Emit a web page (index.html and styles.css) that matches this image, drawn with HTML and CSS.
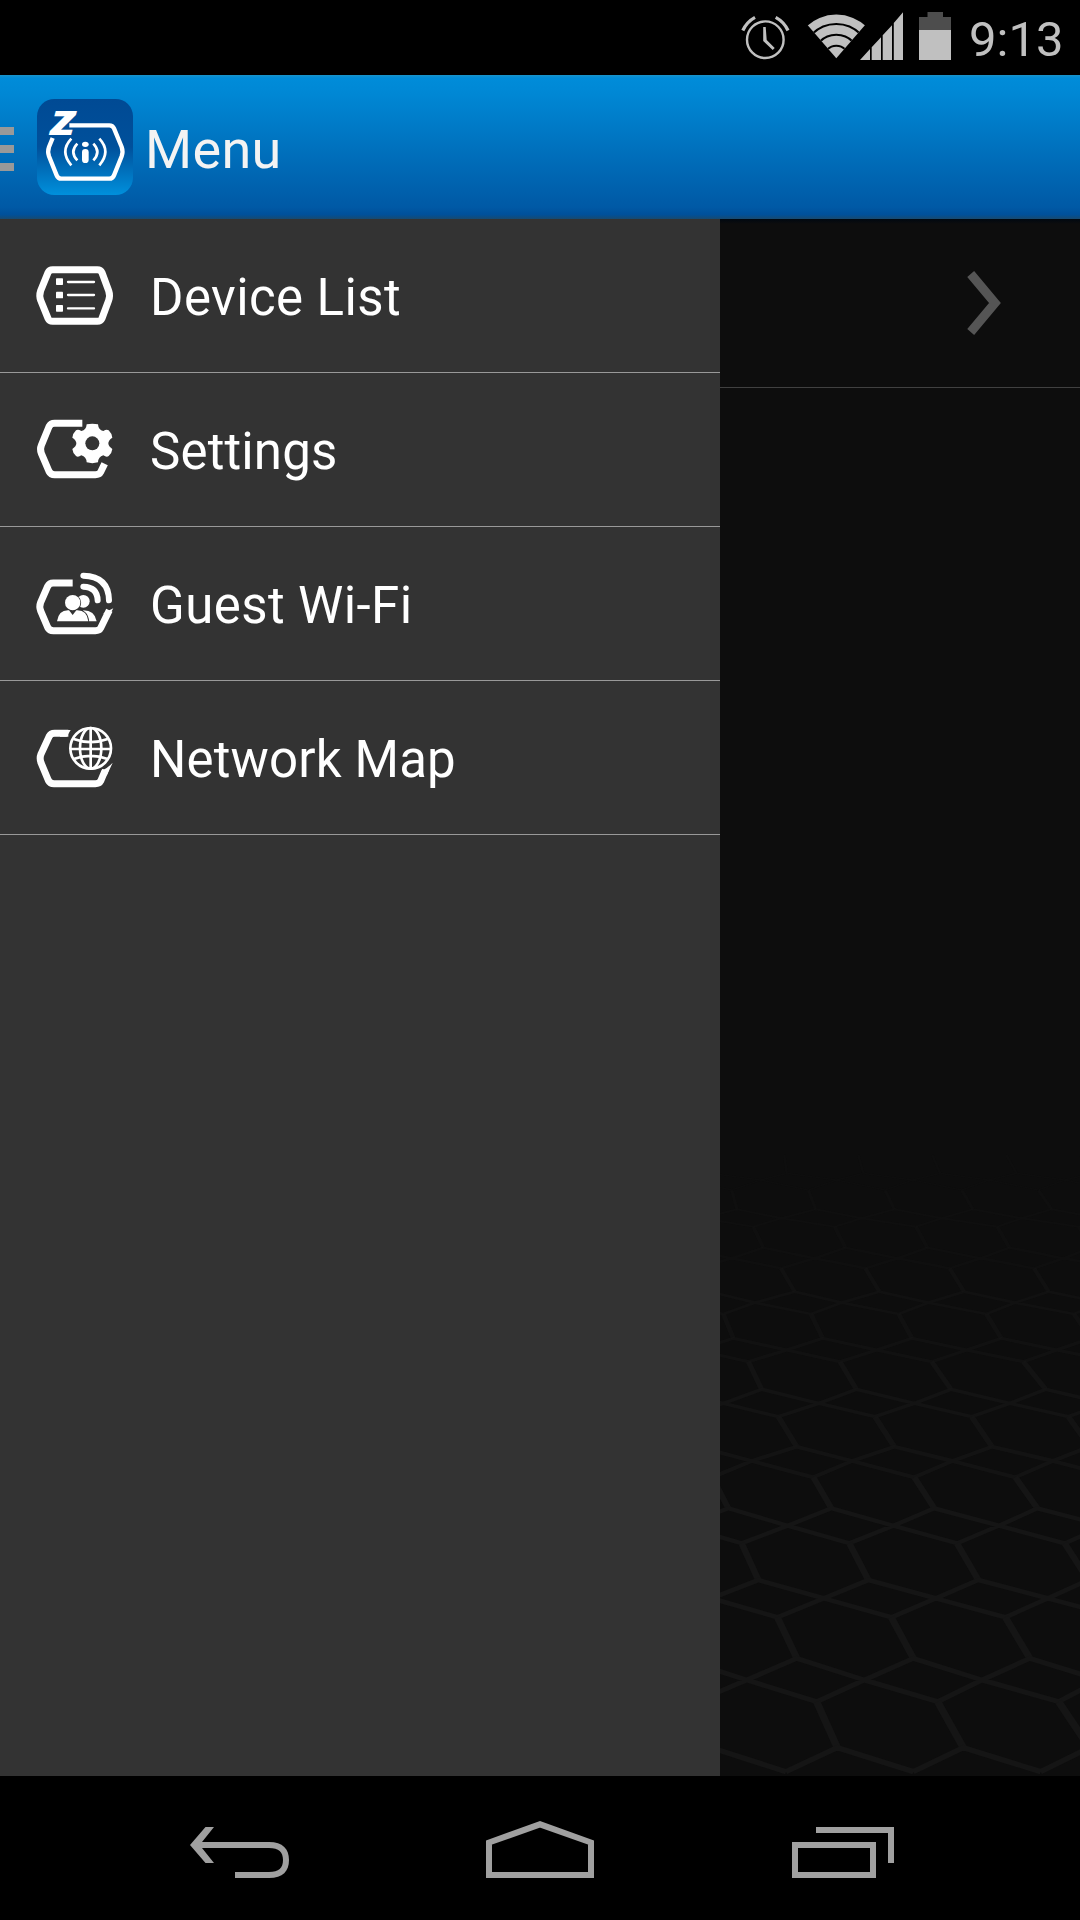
FILE: index.html
```html
<!DOCTYPE html>
<html>
<head lang="en">
    <meta charset="UTF-8">
    <title>Menu</title>
    <link rel="stylesheet" href="styles.css">
</head>
<body>
<div class="phone">
    <!-- status bar -->
    <div class="status">
        <svg class="statusIcons" viewBox="720 0 240 75">
            <g fill="none" stroke="#c0c0c0" stroke-width="2.4">
                <circle cx="765.3" cy="39.7" r="18.3"/>
                <path d="M742.8 30.5Q746.5 22 755 17.3M788 30.5Q784.300 22 775.700 17.300" stroke-width="3.2"/>
            </g>
            <path fill="#c0c0c0" d="M763.200 27h2.500l1 13 8 8-2 2-9.500-9z"/>
            <clipPath id="fan"><path d="M836.300 58.300L807.500 25V10h57.600v15z"/></clipPath>
            <g clip-path="url(#fan)">
                <circle cx="836.300" cy="58.300" r="43.700" fill="#c0c0c0"/>
                <g fill="none" stroke="#000" stroke-width="2">
                    <circle cx="836.300" cy="58.300" r="34.300"/>
                    <circle cx="836.300" cy="58.300" r="23.500"/>
                    <circle cx="836.300" cy="58.300" r="12.600"/>
                </g>
            </g>
            <path fill="#c0c0c0" d="M860 60l10-11v11zM871.700 60V47.200l9.300-10V60zM882.700 60V35.200l9.300-10V60zM893.800 60V23L903 12.300V60z"/>
            <path fill="#4d4d4d" d="M919 30V17h8.500v-5H943v5h8v13z"/>
            <path fill="#c0c0c0" d="M919 30h32v30h-32z"/>
        </svg>
        <span class="time">9:13</span>
    </div>

    <!-- title bar -->
    <div class="header">
        <div class="burger"><i></i><i></i><i></i></div>
        <svg class="logo" viewBox="111 87 288 288">
            <defs>
                <linearGradient id="logoBg" x1="0" y1="0" x2="0" y2="1">
                    <stop offset="0" stop-color="#004a94"/>
                    <stop offset=".5" stop-color="#00509b"/>
                    <stop offset="1" stop-color="#0090dc"/>
                </linearGradient>
            </defs>
            <rect x="111" y="87" width="288" height="288" rx="52" fill="url(#logoBg)"/>
            <path d="M208 166H328Q338 166 342 175L365 231Q370 245 365 259L342 316Q338 326 328 326H184Q174 326 170 316L147 259Q142 245 147 231L158 204" fill="none" stroke="#fff" stroke-width="13"/>
            <text x="152" y="194" class="zed" textLength="71" lengthAdjust="spacingAndGlyphs">Z</text>
            <g fill="none" stroke="#fff" stroke-width="8">
                <path d="M214 206Q178 244 214 286M232 221Q208 246 232 271M298 206Q334 244 298 286M280 221Q304 246 280 271"/>
            </g>
            <ellipse cx="256" cy="223" rx="10" ry="8" fill="#fff"/>
            <rect x="246" y="237" width="20" height="42" rx="10" fill="#fff"/>
        </svg>
        <span class="title">Menu</span>
    </div>

    <div class="main">
        <!-- drawer -->
        <ul class="drawer">
            <li>
                <svg class="icon" viewBox="60 18 360 300">
                    <path class="frame" d="M158 89H292Q302 89 306 98L326 152Q331 167 326 181L306 235Q302 244 292 244H158Q148 244 144 235L122 181Q117 167 122 152L144 98Q148 89 158 89Z"/>
                    <g fill="#fff">
                        <rect x="168" y="115" width="21" height="20" rx="2"/>
                        <rect x="168" y="155" width="21" height="20" rx="2"/>
                        <rect x="168" y="195" width="21" height="20" rx="2"/>
                    </g>
                    <path d="M204 126h78M204 165h78M204 205h78" stroke="#fff" stroke-width="7" stroke-linecap="round"/>
                </svg>
                <span class="wide">Device List</span>
            </li>
            <li>
                <svg class="icon" viewBox="0 0 360 300">
                    <path class="frame" d="M187 70H104Q92 70 87 80L64 136Q59 148 64 160L87 214Q92 224 104 224H226Q238 224 242 216L254 191"/>
                    <path class="solid" d="M200 73Q217 69 234 73Q235 90 250 93Q260 86 266 91Q276 101 277 113Q265 121 265 130Q265 139 277 147Q276 159 266 168Q260 173 250 166Q235 170 234 187Q217 192 200 187Q199 170 184 166Q174 173 168 168Q158 159 157 147Q169 139 169 130Q169 121 157 113Q158 101 168 91Q174 86 184 93Q199 90 200 73Z"/>
                    <circle cx="217" cy="130" r="21" fill="#333"/>
                </svg>
                <span>Settings</span>
            </li>
            <li>
                <svg class="icon" viewBox="0 -3 360 300">
                    <path class="frame" d="M158 84H100Q88 84 83 94L62 142Q57 155 62 168L83 217Q88 227 100 227H226Q238 227 242 219L268 166"/>
                    <path class="solid" d="M250 175L280 160L264 188Z"/>
                    <circle class="solid" cx="190" cy="139" r="19"/>
                    <path class="solid" d="M190 166Q224 166 230 199H180Z"/>
                    <circle class="person" cx="158" cy="143" r="23"/>
                    <path class="person" d="M111 199Q116 164 147 166L158 180L169 166Q201 164 205 199Z"/>
                    <path class="wave" d="M190 95Q232 96 233 136M190 62Q266 64 267 136"/>
                </svg>
                <span class="wide">Guest Wi-Fi</span>
            </li>
            <li>
                <svg class="icon" viewBox="0 -6 360 300">
                    <path class="frame" d="M145 70H104Q92 70 87 80L63 132Q58 145 63 158L85 211Q90 221 102 221H226Q238 221 242 213L256 180"/>
                    <path class="solid" d="M152 60L140 80H120V60ZM245 181Q262 175 278 158L260 197Z"/>
                    <circle class="globe" cx="212" cy="115" r="72" />
                    <g class="lines">
                        <circle cx="212" cy="115" r="61"/>
                        <ellipse cx="212" cy="115" rx="32" ry="61"/>
                        <path d="M212 53V177M161 87Q212 106 263 87M150 117H274M161 147Q212 128 263 147"/>
                    </g>
                </svg>
                <span>Network Map</span>
            </li>
        </ul>

        <!-- page under the drawer -->
        <div class="page">
            <div class="pageRow">
                <svg class="arrow" viewBox="0 0 40 70"><path d="M3.700 6L28 35L3.700 64" fill="none" stroke="#555" stroke-width="9"/></svg>
            </div>
            <svg class="honeycomb" viewBox="60 -720 1080 1908"></svg>
        </div>
    </div>

    <!-- navigation keys -->
    <div class="nav">
        <svg viewBox="180 1815 120 70">
            <path d="M205.500 1827h8.500l-12 15h67c14 0 20 7 20 18s-6 18-20 18h-34v-6h34c10 0 14-4 14-12s-4-12-14-12h-67l12 15h-8.500l-15.500-18z" fill="#a0a0a0"/>
        </svg>
        <svg viewBox="480 1815 120 70">
            <path d="M489 1875V1842.500L540 1824.300L591 1842.500V1875Z" fill="none" stroke="#a0a0a0" stroke-width="6"/>
        </svg>
        <svg viewBox="780 1815 120 70">
            <path d="M795 1845H873V1875H795ZM816 1830H891V1863" fill="none" stroke="#a0a0a0" stroke-width="6"/>
        </svg>
    </div>
</div>
<script src="honeycomb.js"></script>
</body>
</html>
```
FILE: styles.css
```css
*{margin:0;padding:0;box-sizing:border-box;}
body{
    width:1080px;height:1920px;background:#000;overflow:hidden;
    font-family:Roboto,"Liberation Sans",sans-serif;
}
svg{display:block;flex:none;}
.phone{width:1080px;height:1920px;display:flex;flex-direction:column;}

/* status bar */
.status{
    height:75px;padding-left:720px;display:flex;align-items:center;
    flex:none;
}
.statusIcons{width:240px;height:75px;}
.time{color:#c0c0c0;font-size:49px;line-height:75px;margin:3px 0 0 9px;}

/* title bar */
.header{
    height:144px;flex:none;display:flex;align-items:center;
    background:linear-gradient(#1a93ca 0,#008cd9 3px,#0088d5 12%,#0059a5 92%,#00509a 97%,#174a70 100%);
}
.burger{width:14px;display:flex;flex-direction:column;gap:10px;margin-top:3px;}
.burger i{height:8px;background:#999;}
.logo{width:96px;height:96px;margin:0 0 0 23px;}
.zed{
    font:italic 800 99px "Open Sans",sans-serif;fill:#fff;
}
.title{color:#f3f3f3;font-size:54px;letter-spacing:.3px;margin-left:12px;margin-top:5px;}

.main{height:1557px;flex:none;display:flex;}
.drawer{width:720px;background:#333;list-style:none;}
.drawer li{
    height:154px;padding-left:20px;display:flex;align-items:center;
    border-bottom:1px solid #999;color:#fff;font-size:51px;
}
.drawer span{margin:3px 0 0 10px;letter-spacing:.15px;}
.drawer .wide{letter-spacing:.42px;}
.icon{width:120px;height:100px;}
.frame{fill:none;stroke:#fff;stroke-width:21;}
.solid{fill:#fff;}
.person{fill:#fff;stroke:#333;stroke-width:5;paint-order:stroke;}
.wave{fill:none;stroke:#fff;stroke-width:18;stroke-linecap:round;}
.globe{fill:#333;}
.lines{fill:none;stroke:#fff;stroke-width:8;}

/* dimmed page */
.page{
    flex:1;display:flex;flex-direction:column;
    background:linear-gradient(#000811 0,#0d0d0d 5px);
}
.pageRow{
    height:169px;border-bottom:1px solid #404040;padding-right:73px;
    display:flex;align-items:center;justify-content:flex-end;
}
.arrow{width:40px;height:70px;}
.honeycomb{width:360px;height:636px;margin-top:auto;}
.honeycomb path{fill:none;stroke:#151515;}

/* navigation keys */
.nav{height:144px;flex:none;display:flex;justify-content:center;gap:180px;padding-top:39px;}
.nav svg{width:120px;height:70px;}
```
FILE: honeycomb.js
```js
// each row: [y, first x, step] for the edge tops, edge bottoms and the joints below
var rows=[
    [[-675,31,222],[-620,30,230],[-600,-46,228]],
    [[-570,-135,230],[-512,-125,236],[-485,-235,240]],
    [[-460,-328,244],[-397,-302,246],[-365,-403,249]],
    [[-335,-516,253],[-265,-478,254],[-232,-615,260]],
    [[-198,-719,263],[-125,-704,268],[-90,-820,270]],
    [[-55,-955,275],[28,-951,284],[70,-1076,286.5]],
    [[110,-1215,290],[200,-1175,293],[243,-1350,301]],
    [[292,-1478,303],[385,-1460,309],[437,-1639,317]],
    [[490,-1813,323],[600,-1805,330],[655,-1981,336]],
    [[712,-2162,342],[835,-2156,349.5],[900,-2331,353]],
    [[965,-2554,363],[1103,-2612,378],[1175,-2798,382]]
];
var box=document.querySelector(".honeycomb");

function pt(line,i){
    return (line[1]+line[2]*i)+' '+line[0];
}
function draw(d,width,opacity){
    var p=document.createElementNS("http://www.w3.org/2000/svg","path");
    p.setAttribute("d",d);
    p.setAttribute("stroke-width",width);
    p.setAttribute("opacity",opacity);
    box.appendChild(p);
}
rows.forEach(function(row,n){
    var edges='',links='',next=rows[n+1];
    for(var i=0;i<12;i++){
        edges+='M'+pt(row[0],i)+'L'+pt(row[1],i);
        links+='M'+pt(row[2],i)+'L'+pt(row[1],i)+'L'+pt(row[2],i+1);
        if(next){
            links+='M'+pt(next[0],i)+'L'+pt(row[2],i)+'L'+pt(next[0],i+1);
        }
    }
    var opacity=Math.min(1,0.15+n*0.12);
    draw(edges,8+n*1.4,opacity);
    draw(links,5+n*1.1,opacity);
});
```
